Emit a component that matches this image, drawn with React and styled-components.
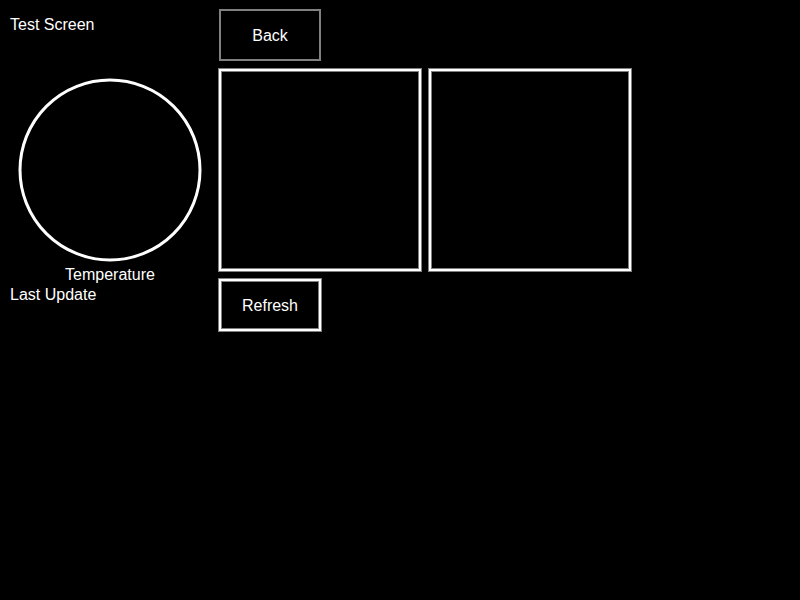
import React from "react";
import styled, { createGlobalStyle } from "styled-components";

const GlobalStyle = createGlobalStyle`
  * { box-sizing: border-box; }
  body { margin: 0; background: #000; color: #fff; font: 16px/20px "Liberation Sans", Arial, sans-serif; }
`;

const Screen = styled.main`
  display: grid;
  grid-template-columns: 200px 1fr;
  column-gap: 9px;
  padding: 9px 10px;
`;

const Readings = styled.section`
  display: flex;
  flex-direction: column;
`;

const Title = styled.h1`
  margin: 6px 0 43px;
  font-size: 16px;
  font-weight: 400;
  line-height: 20px;
`;

const Gauge = styled.figure`
  display: flex;
  flex-direction: column;
  align-items: center;
  gap: 3px;
  margin: 0;
`;

const Dial = styled.svg`
  display: block;
  width: 184px;
  height: 184px;
`;

const Label = styled.p`
  margin: 0;
`;

const Controls = styled.section`
  display: flex;
  flex-direction: column;
  align-items: flex-start;
  gap: 8px;
`;

const softEdge = "0 0 0 1px #808080, inset 0 0 0 1px #808080";

const Button = styled.button`
  width: 102px;
  height: 52px;
  padding: 2px 0 0;
  border: 2px solid ${(p) => (p.$strong ? "#fff" : "#808080")};
  box-shadow: ${(p) => (p.$strong ? softEdge : "none")};
  background: #000;
  color: #fff;
  font: inherit;
`;

const Panels = styled.div`
  display: flex;
  flex-wrap: wrap;
  gap: 8px;
`;

const Panel = styled.div`
  width: 202px;
  height: 202px;
  border: 2px solid #fff;
  box-shadow: ${softEdge};
`;

export default function App() {
  return (
    <>
      <GlobalStyle />
      <Screen>
        <Readings>
          <Title>Test Screen</Title>
          <Gauge>
            <Dial viewBox="0 0 184 184" aria-hidden="true">
              <circle cx="92" cy="92" r="90" fill="none" stroke="#fff" strokeWidth="3" />
            </Dial>
            <figcaption>Temperature</figcaption>
          </Gauge>
          <Label>Last Update</Label>
        </Readings>
        <Controls>
          <Button type="button">Back</Button>
          <Panels>
            <Panel />
            <Panel />
          </Panels>
          <Button type="button" $strong>Refresh</Button>
        </Controls>
      </Screen>
    </>
  );
}
